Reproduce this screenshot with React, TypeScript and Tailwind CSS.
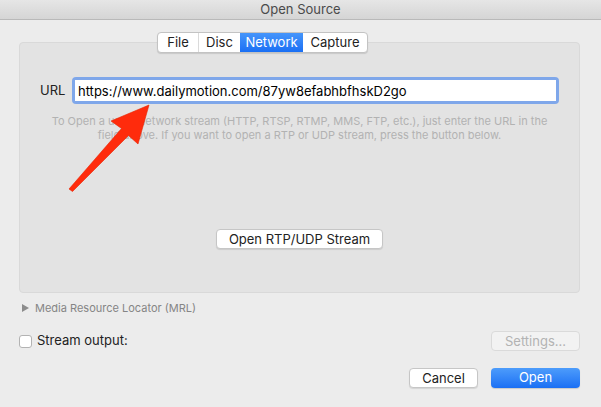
import React, { useState } from 'react';

const tabs = ['File', 'Disc', 'Network', 'Capture'];
const tabWidth: Record<string, string> = {
  File: 'w-[40px]',
  Disc: 'w-[42px]',
  Network: 'w-[63px]',
  Capture: 'w-[64px]',
};

export default function App() {
  const [activeTab, setActiveTab] = useState('Network');
  const [url, setUrl] = useState('https://www.dailymotion.com/87yw8efabhbfhskD2go');
  const [streamOutput, setStreamOutput] = useState(false);

  return (
    <div className="relative w-[601px] h-[407px] overflow-hidden bg-[#ececec] text-[13px] text-[#222] font-['Inter','Liberation_Sans',Arial,sans-serif]">
      {/* title bar */}
      <div className="h-[20px] flex items-center justify-center bg-gradient-to-b from-[#e6e6e6] to-[#d5d5d5] border-b border-[#b9b9b9] text-[#4a4a4a]">
        Open Source
      </div>

      <div className="pl-[19px] pr-[21px]">
        {/* tab panel */}
        <div className="mt-[22px] h-[251px] rounded-[4px] bg-[#e3e3e3] border border-[#d9d9d9] flex flex-col">
          <div className="-mt-[11px] ml-[137px] self-start flex h-[21px] rounded-[4px] border border-[#c3c3c3] bg-white shadow-[0_1px_1px_rgba(0,0,0,0.12)] overflow-hidden">
            {tabs.map((t, i) => (
              <button
                key={t}
                onClick={() => setActiveTab(t)}
                className={`h-full flex items-center justify-center text-[13px] ${tabWidth[t]} ${
                  activeTab === t
                    ? 'bg-gradient-to-b from-[#4595fb] to-[#1a6ff4] text-white'
                    : 'text-[#222]'
                } ${i > 0 && activeTab !== t && activeTab !== tabs[i - 1] ? 'border-l border-[#dadada]' : ''}`}
              >
                {t}
              </button>
            ))}
          </div>

          <div className="w-full flex items-center mt-[24px] pl-[20px] pr-[20px]">
            <span className="w-[32px] text-[#222]">URL</span>
            <div className="flex-1 rounded-[4px] p-[3px] bg-[#7fa7ea]">
              <input
                value={url}
                onChange={e => setUrl(e.target.value)}
                className="w-full h-[21px] bg-white px-[3px] text-[13px] text-black outline-none"
              />
            </div>
          </div>

          <p className="mt-[10px] text-center text-[11px] leading-[14px] text-[#b2b2b2]">
            To Open a usual network stream (HTTP, RTSP, RTMP, MMS, FTP, etc.), just enter the URL in the
            <br />
            field above. If you want to open a RTP or UDP stream, press the button below.
          </p>

          <button className="mt-[87px] self-center w-[167px] h-[20px] rounded-[4px] bg-white border border-[#c6c6c6] shadow-[0_1px_1px_rgba(0,0,0,0.1)] text-[13px] text-[#222]">
            Open RTP/UDP Stream
          </button>
        </div>

        {/* MRL */}
        <div className="mt-[8px] h-[14px] flex items-center pl-[3px] gap-[6px] text-[11px] text-[#858585]">
          <svg width="7" height="8" viewBox="0 0 7 8">
            <path d="M0 0 L7 4 L0 8 Z" fill="#8c8c8c" />
          </svg>
          <span>Media Resource Locator (MRL)</span>
        </div>

        {/* stream output */}
        <div className="mt-[16px] flex items-center justify-between">
          <label className="flex items-center gap-[5px]">
            <input
              type="checkbox"
              checked={streamOutput}
              onChange={e => setStreamOutput(e.target.checked)}
              className="appearance-none w-[13px] h-[13px] rounded-[3px] bg-white border border-[#b3b3b3]"
            />
            <span>Stream output:</span>
          </label>
          <button disabled className="w-[89px] h-[20px] rounded-[4px] bg-[#f2f2f2] border border-[#dadada] text-[#b3b3b3]">
            Settings...
          </button>
        </div>

        {/* footer */}
        <div className="mt-[17px] flex justify-end gap-[13px]">
          <button className="w-[69px] h-[20px] rounded-[4px] bg-white border border-[#c6c6c6] shadow-[0_1px_1px_rgba(0,0,0,0.1)] text-[#222]">
            Cancel
          </button>
          <button className="w-[89px] h-[20px] rounded-[4px] bg-gradient-to-b from-[#4d9cfb] to-[#1a6ff4] text-white shadow-[0_1px_1px_rgba(0,0,0,0.15)]">
            Open
          </button>
        </div>
      </div>

      {/* annotation arrow */}
      <svg className="absolute left-0 top-0 pointer-events-none" width="601" height="407">
        <polygon
          points="149,105 111,121 121.5,128.5 69,189 72.5,191.5 128.5,135.5 138,144"
          fill="#ff2b0c"
          stroke="#e82400"
          strokeWidth="0.6"
          strokeLinejoin="round"
        />
      </svg>
    </div>
  );
}
